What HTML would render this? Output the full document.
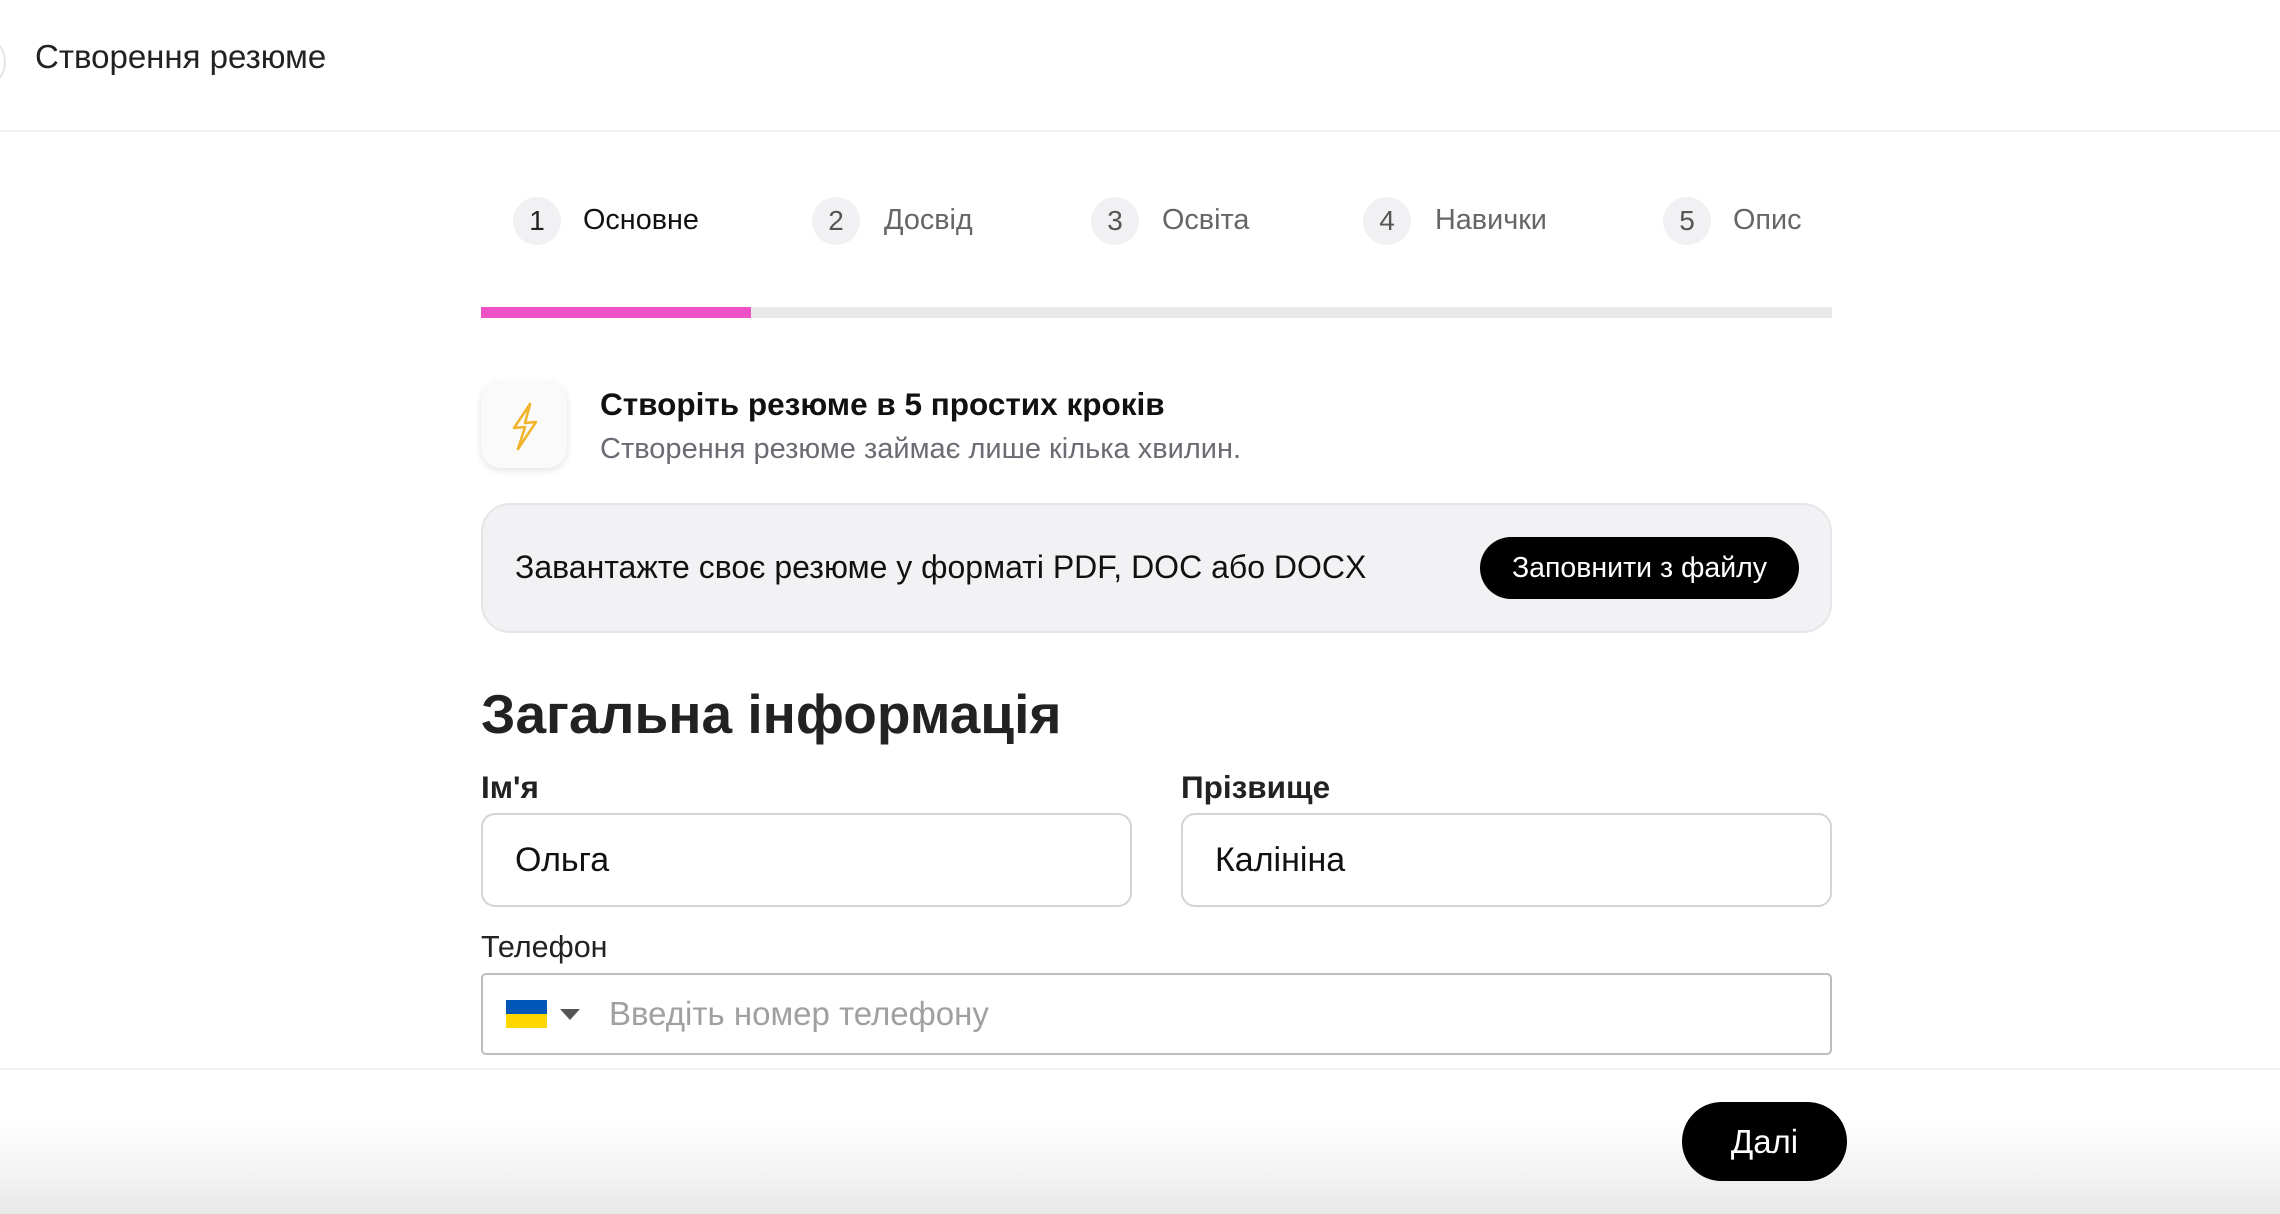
<!DOCTYPE html>
<html><head><meta charset="utf-8"><style>
*{margin:0;padding:0;box-sizing:border-box}
body{width:2280px;height:1214px;position:relative;overflow:hidden;background:#fff;font-family:"Liberation Sans","DejaVu Sans",sans-serif;color:#111}
.a{position:absolute;white-space:nowrap}
.c{position:absolute;width:48px;height:48px;border-radius:50%;background:#f1f1f3;color:#555;font-size:28px;line-height:48px;text-align:center;top:197px}
.st{position:absolute;top:203px;font-size:28.8px;color:#666;line-height:34px}
.lbl{position:absolute;font-size:31.5px;font-weight:bold;color:#222;line-height:36px}
.inp{position:absolute;border:2px solid #d4d4d8;border-radius:14px;height:94px;top:813px;font-size:34px;line-height:90px;padding-left:32px;color:#111}
</style></head><body>
<div class="a" style="left:-50px;top:34px;width:56px;height:56px;border-radius:50%;border:2px solid #e5e5e5"></div>
<div class="a" style="left:35px;top:38px;font-size:33px;color:#222;line-height:38px">Створення резюме</div>
<div class="a" style="left:0;top:130px;width:2280px;height:2px;background:#f0f0f2"></div>

<div class="c" style="left:513px;color:#222">1</div><div class="st" style="left:583px;color:#111">Основне</div>
<div class="c" style="left:812px">2</div><div class="st" style="left:884px">Досвід</div>
<div class="c" style="left:1091px">3</div><div class="st" style="left:1162px">Освіта</div>
<div class="c" style="left:1363px">4</div><div class="st" style="left:1435px">Навички</div>
<div class="c" style="left:1663px">5</div><div class="st" style="left:1733px">Опис</div>

<div class="a" style="left:481px;top:307px;width:1351px;height:11px;background:#e9e9ec"></div>
<div class="a" style="left:481px;top:307px;width:270px;height:11px;background:#ef52c6"></div>

<div class="a" style="left:481px;top:382px;width:86px;height:86px;border-radius:20px;background:#fafafa;box-shadow:0 2px 8px rgba(0,0,0,.12)">
<svg width="86" height="86" viewBox="0 0 86 86"><path d="M49 22 L33 46 L44 45 L37 67 L55 40 L44 41 Z" fill="none" stroke="#f0b429" stroke-width="2.5" stroke-linejoin="round"/></svg></div>
<div class="a" style="left:600px;top:386px;font-size:31.5px;font-weight:bold;line-height:36px">Створіть резюме в 5 простих кроків</div>
<div class="a" style="left:600px;top:432px;font-size:29px;color:#6b6b73;line-height:34px">Створення резюме займає лише кілька хвилин.</div>

<div class="a" style="left:481px;top:503px;width:1351px;height:130px;border-radius:29px;background:#f2f2f4;border:2px solid #e6e6e9"></div>
<div class="a" style="left:515px;top:548px;font-size:32px;line-height:38px;color:#111">Завантажте своє резюме у форматі PDF, DOC або DOCX</div>
<div class="a" style="left:1480px;top:537px;width:319px;height:62px;border-radius:31px;background:#000;color:#fff;font-size:28.5px;line-height:62px;text-align:center">Заповнити з файлу</div>

<div class="a" style="left:481px;top:682px;font-size:55px;font-weight:bold;color:#222;line-height:64px">Загальна інформація</div>
<div class="lbl" style="left:481px;top:769px">Ім'я</div>
<div class="lbl" style="left:1181px;top:769px">Прізвище</div>
<div class="inp" style="left:481px;width:651px">Ольга</div>
<div class="inp" style="left:1181px;width:651px">Калініна</div>
<div class="a" style="left:481px;top:929px;font-size:30.5px;color:#222;line-height:36px">Телефон</div>
<div class="a" style="left:481px;top:973px;width:1351px;height:82px;border:2px solid #bdbdbd;border-radius:5px"></div>
<div class="a" style="left:506px;top:1000px;width:41px;height:14px;background:#0057b8"></div>
<div class="a" style="left:506px;top:1014px;width:41px;height:14px;background:#ffd700"></div>
<div class="a" style="left:560px;top:1009px;width:0;height:0;border-left:10px solid transparent;border-right:10px solid transparent;border-top:11px solid #555"></div>
<div class="a" style="left:609px;top:995px;font-size:33px;color:#a0a0a0;line-height:38px">Введіть номер телефону</div>

<div class="a" style="left:0;top:1068px;width:2280px;height:146px;background:linear-gradient(#fff 0%,#fff 35%,#e9e9e9 100%);border-top:2px solid #f0f0f0"></div>
<div class="a" style="left:1682px;top:1102px;width:165px;height:79px;border-radius:40px;background:#000;color:#fff;font-size:33px;line-height:79px;text-align:center">Далі</div>
</body></html>
